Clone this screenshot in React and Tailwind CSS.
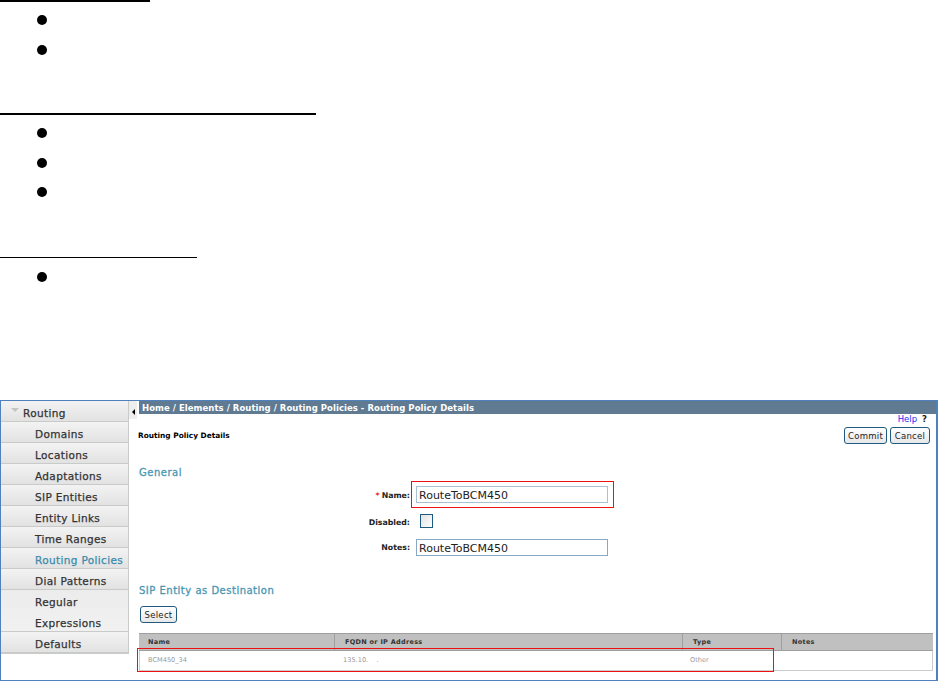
import React from 'react';

const navItems = ['Domains', 'Locations', 'Adaptations', 'SIP Entities', 'Entity Links', 'Time Ranges', 'Routing Policies', 'Dial Patterns'];

function Rule({ className }) {
  return <div className={`bg-black ${className}`} />;
}

function Bullets({ count, className }) {
  return (
    <ul className={`flex flex-col gap-[19.5px] pl-[37px] ${className}`}>
      {Array.from({ length: count }).map((_, i) => (
        <li key={i} className="h-[10px] w-[10px] rounded-full bg-black" />
      ))}
    </ul>
  );
}

function NavItem({ label, active }) {
  return (
    <div className={`flex h-[21px] items-center border-b border-[#c9cbc9] bg-gradient-to-b from-[#f3f3f3] to-[#e2e2e2] pl-[34px] pt-[5px] text-[10.5px] tracking-[0.35px] [-webkit-text-stroke:0.25px] ${active ? 'text-[#3c8bab]' : 'text-[#333333]'}`}>
      {label}
    </div>
  );
}

function Button({ children, className }) {
  return (
    <button className={`flex h-[17px] items-center justify-center rounded-[3px] border border-[#1f5a80] bg-gradient-to-b from-white to-[#e8e8e8] pt-[1px] text-[8.5px] tracking-[0.3px] text-[#222222] ${className}`}>
      {children}
    </button>
  );
}

function Heading({ children, className }) {
  return <div className={`text-[10px] leading-[12px] tracking-[0.5px] text-[#4a97b3] [-webkit-text-stroke:0.3px] ${className}`}>{children}</div>;
}

export default function App() {
  return (
    <div className="flex h-[681px] w-[939px] flex-col overflow-hidden bg-white font-['DejaVu_Sans',sans-serif]">
      <Rule className="h-[2px] w-[150px]" />
      <Bullets count={2} className="mt-[13px]" />
      <Rule className="mt-[58.5px] h-[2px] w-[316px]" />
      <Bullets count={3} className="mt-[13px]" />
      <Rule className="mt-[60px] h-[1px] w-[197px]" />
      <Bullets count={1} className="mt-[14px]" />

      {/* Embedded screenshot panel */}
      <div className="mt-[118px] flex h-[281px] w-[938px] border-y border-r-2 border-l-[1px] border-[#4f81bd]">
        <aside className="w-[128px] shrink-0">
          <div className="flex h-[253px] flex-col border-r border-b border-[#c9cbc9]">
            <div className="flex h-[21px] items-center gap-[4px] border-b border-[#c9cbc9] bg-gradient-to-b from-[#f3f3f3] to-[#e2e2e2] pl-[10px] pt-[5px] text-[10.5px] tracking-[0.35px] text-[#333333] [-webkit-text-stroke:0.25px]">
              <span className="mt-[-7px] h-0 w-0 border-x-[4px] border-t-[4px] border-x-transparent border-t-[#c4c4c4]" />
              Routing
            </div>
            {navItems.map((item) => (
              <NavItem key={item} label={item} active={item === 'Routing Policies'} />
            ))}
            <div className="flex h-[42px] flex-col justify-center border-b border-[#c9cbc9] bg-gradient-to-b from-[#ececec] to-[#f1f1f1] pl-[34px] pt-[4px] text-[10.5px] leading-[20.5px] tracking-[0.35px] text-[#333333] [-webkit-text-stroke:0.25px]">
              <span>Regular</span>
              <span>Expressions</span>
            </div>
            <NavItem label="Defaults" />
          </div>
        </aside>

        <div className="mr-[2px] flex h-[18px] w-[8px] shrink-0 items-center justify-center bg-[#eeeeee] pt-[3px]">
          <span className="h-0 w-0 border-y-[3px] border-r-[3px] border-y-transparent border-r-black" />
        </div>

        <main className="relative flex min-w-0 flex-1 flex-col">
          <div className="flex h-[13px] items-center bg-[#5f7a91] pl-[3px] pt-[1px] text-[8.5px] font-bold tracking-[0.05px] text-white">
            Home / Elements / Routing / Routing Policies - Routing Policy Details
          </div>

          <div className="flex h-[13px] items-center justify-end gap-[5px] pb-[3px] pr-[9px] text-[8.5px] text-[#2a2aee]">
            <span>Help</span>
            <span className="font-bold text-[#222222]">?</span>
          </div>

          <div className="flex items-center justify-between pr-[6px]">
            <div className="ml-[-1px] text-[7.4px] font-bold text-black">Routing Policy Details</div>
            <div className="flex gap-[3px]">
              <Button className="w-[43px]">Commit</Button>
              <Button className="w-[40px]">Cancel</Button>
            </div>
          </div>

          <Heading className="mt-[23px]">General</Heading>

          <div className="mt-[7px] flex flex-col">
            <div className="flex h-[17px] items-center">
              <div className="w-[271px] pt-[2px] text-right text-[7.8px] font-bold text-[#222222]"><span className="mr-[2px] text-[#dd2222]">*</span>Name:</div>
              <div className="ml-[6px] flex h-[17px] w-[192px] items-center border border-[#a9c2d2] pl-[2px] pt-[3px] text-[11px] text-[#222222]">RouteToBCM450</div>
            </div>
            <div className="mt-[11px] flex h-[14px] items-center">
              <div className="w-[271px] pt-[3px] text-right text-[7.8px] font-bold text-[#222222]">Disabled:</div>
              <div className="ml-[10px] h-[14px] w-[13px] border border-[#1f5a80] bg-gradient-to-br from-[#e2e2e2] to-white" />
            </div>
            <div className="mt-[11px] flex h-[17px] items-center">
              <div className="w-[271px] pt-[1px] text-right text-[7.8px] font-bold text-[#222222]">Notes:</div>
              <div className="ml-[6px] flex h-[17px] w-[192px] items-center border border-[#86aac4] pl-[2px] pt-[3px] text-[11px] text-[#222222]">RouteToBCM450</div>
            </div>
          </div>

          <Heading className="mt-[29px]">SIP Entity as Destination</Heading>

          <Button className="ml-[1px] mt-[9px] w-[37px]">Select</Button>

          <div className="mt-[10px] mr-[3px] flex flex-col">
            <div className="flex h-[18px] items-center border-y border-[#9f9f9f] bg-[#c0c0c0] text-[6.5px] font-bold tracking-[0.3px] text-[#333333]">
              <div className="h-full w-[196px] border-r border-[#9f9f9f] pl-[9px] leading-[16px]">Name</div>
              <div className="h-full w-[348px] border-r border-[#9f9f9f] pl-[10px] leading-[16px]">FQDN or IP Address</div>
              <div className="h-full w-[99px] border-r border-[#9f9f9f] pl-[10px] leading-[16px]">Type</div>
              <div className="h-full flex-1 pl-[10px] leading-[16px]">Notes</div>
            </div>
            <div className="flex h-[20px] items-center border-x border-b border-[#cccccc] text-[6.6px] text-[#999999]">
              <div className="w-[195px] pl-[8px]">BCM450_34</div>
              <div className="w-[348px] pl-[8px]">135.10.&nbsp;&nbsp;&nbsp;&nbsp;.</div>
              <div className="w-[99px] pl-[7px]">Other</div>
            </div>
          </div>

          {/* Red callouts */}
          <div className="absolute left-[272px] top-[80px] h-[27px] w-[203px] border border-[#ee1111]" />
          <div className="absolute left-[-2px] top-[247px] h-[24px] w-[637px] border border-[#ee1111]" />
        </main>
      </div>
    </div>
  );
}
